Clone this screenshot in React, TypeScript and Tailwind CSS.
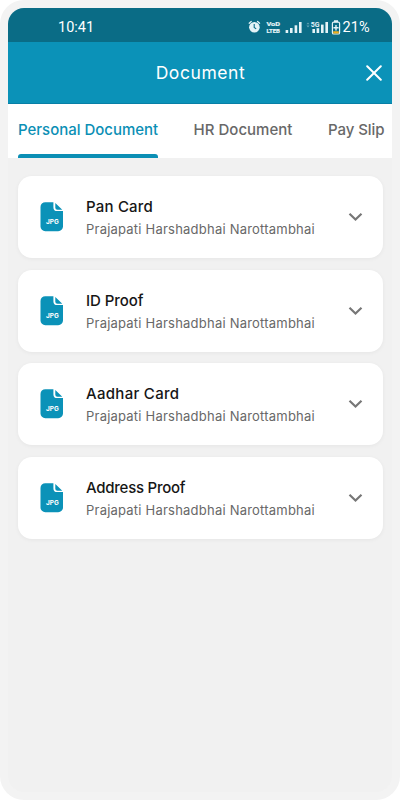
import { useState } from "react";

const TABS = [
  { label: "Personal Document", tracking: "tracking-[-0.02px]" },
  { label: "HR Document", tracking: "tracking-[0.01px]" },
  { label: "Pay Slip", tracking: "tracking-[-0.05px]" },
];

const DOCUMENTS = [
  { title: "Pan Card", tracking: "tracking-[0.2px]" },
  { title: "ID Proof", tracking: "tracking-[-0.05px]" },
  { title: "Aadhar Card", tracking: "tracking-[0.3px]" },
  { title: "Address Proof", tracking: "tracking-[-0.25px]" },
];

function StatusIcons() {
  return (
    <svg
      width="94"
      height="18"
      viewBox="0 0 94 18"
      className="block"
      fill="#e4f3f7"
      fontFamily="Roboto, sans-serif"
    >
      {/* alarm */}
      <circle cx="7.4" cy="9.2" r="5.3" />
      <path
        d="M2.2 5.2 4.2 3.5M12.6 5.2 10.6 3.5"
        stroke="#e4f3f7"
        strokeWidth="1.3"
        strokeLinecap="round"
      />
      <path
        d="M7.2 6v3.4l2 1.5"
        stroke="#0a6c86"
        strokeWidth="1.1"
        fill="none"
      />
      {/* volte */}
      <g fontSize="6" fontWeight="700" stroke="#e4f3f7" strokeWidth="0.2">
        <text
          x="19.4"
          y="8.2"
          textLength="13.6"
          lengthAdjust="spacingAndGlyphs"
        >
          VoD
        </text>
        <text
          x="19.4"
          y="15.2"
          textLength="13.6"
          lengthAdjust="spacingAndGlyphs"
        >
          LTEB
        </text>
      </g>
      {/* signal */}
      <rect x="38.6" y="12" width="2.6" height="3" />
      <rect x="43" y="10" width="2.6" height="5" />
      <rect x="47.6" y="7.3" width="2.6" height="7.7" />
      <rect x="52" y="4" width="2.6" height="11" />
      {/* 5g signal */}
      <path d="m59.4 6.2 1.6-1.8 1.6 1.8zM59.4 7.6h3.2L61 9.4z" opacity="0.4" />
      <text
        x="63.8"
        y="8.8"
        fontSize="7.8"
        fontWeight="700"
        textLength="8.8"
        lengthAdjust="spacingAndGlyphs"
      >
        5G
      </text>
      <rect x="65.4" y="11" width="2.6" height="4" />
      <rect x="69.6" y="10.2" width="2.6" height="4.8" />
      <rect x="74" y="6.6" width="2.6" height="8.4" />
      <rect x="78.4" y="4" width="2.6" height="11" />
      {/* battery */}
      <path d="M87 2.2h4v2h-4z" />
      <rect
        x="85.4"
        y="4.2"
        width="7.2"
        height="11.8"
        rx="1.3"
        fill="none"
        stroke="#e4f3f7"
        strokeWidth="1.2"
      />
      <path d="M86.2 13.2h5.6v2.2h-5.6z" fill="#f2b01e" />
      <path d="M88.3 7h1.4v2h1.9v1.4h-1.9v2h-1.4v-2h-1.9V9h1.9z" />
    </svg>
  );
}

function FileIcon() {
  return (
    <svg width="24" height="30" viewBox="0 0 24 30" className="block">
      <path
        d="M5.3.2h8.1v5a3.9 3.9 0 0 0 3.9 3.9h5.7v15.3a4.8 4.8 0 0 1-4.8 4.8H5.3a4.8 4.8 0 0 1-4.8-4.8V5A4.8 4.8 0 0 1 5.3.2z"
        fill="#0b92b8"
      />
      <path
        d="M15.3.9 22.3 7.8h-4.9a2.1 2.1 0 0 1-2.1-2.1z"
        fill="#0b92b8"
      />
      <text
        x="6"
        y="22"
        fontSize="6.6"
        fontWeight="700"
        fontFamily="Inter, sans-serif"
        textLength="12.8"
        lengthAdjust="spacingAndGlyphs"
        fill="#ffffff"
      >
        JPG
      </text>
    </svg>
  );
}

function DocumentCard({
  title,
  tracking,
  owner,
}: {
  title: string;
  tracking: string;
  owner: string;
}) {
  return (
    <div className="flex h-[82px] items-center rounded-[14px] bg-white pr-5 pl-[22px] shadow-[0_1px_4px_rgba(0,0,0,0.05)]">
      <FileIcon />
      <div className="ml-[22px] flex-1 pt-px">
        <p
          className={`text-[15px] leading-[23px] font-medium whitespace-nowrap text-[#161616] ${tracking}`}
        >
          {title}
        </p>
        <p className="text-[13px] leading-[22px] tracking-[0.22px] whitespace-nowrap text-[#686868]">
          {owner}
        </p>
      </div>
      <svg width="15" height="10" viewBox="0 0 15 10" className="block">
        <path
          d="M1.5 1.7 7.500 7.5l6-5.800"
          fill="none"
          stroke="#777777"
          strokeWidth="2.2"
        />
      </svg>
    </div>
  );
}

function App() {
  const [selectedTab, setSelectedTab] = useState(0);

  return (
    <div className="h-[800px] w-[400px] overflow-hidden rounded-3xl bg-[#f3f3f3] p-2 font-[Inter,sans-serif]">
      <div className="h-full overflow-hidden rounded-2xl bg-[#f1f1f1]">
        <div className="flex h-[34px] items-center bg-[#0a6c86] pr-[22.5px] pl-[50px] font-[Roboto,sans-serif] text-white">
          <span className="pt-[5px] text-[14.5px] leading-5">10:41</span>
          <div className="ml-auto flex items-center pt-[3px]">
            <StatusIcons />
            <span className="ml-[1.5px] pt-[2px] text-[14.5px] leading-5">
              21%
            </span>
          </div>
        </div>
        <div className="grid h-[62px] grid-cols-[1fr_auto_1fr] items-center border-b border-[#087fa6] bg-[#0b92b8] pr-[10px]">
          <h1 className="col-start-2 ml-[11px] pt-[2px] text-[17.5px] tracking-[0.58px] text-white">
            Document
          </h1>
          <svg
            width="16"
            height="16"
            viewBox="0 0 16 16"
            className="block justify-self-end"
          >
            <path
              d="m1.2 1.2 13.6 13.6M14.8 1.2 1.2 14.8"
              stroke="#ffffff"
              strokeWidth="2"
              strokeLinecap="round"
            />
          </svg>
        </div>
        <div className="flex h-[54px] gap-[35.5px] bg-white pl-[10px]">
          {TABS.map((tab, index) => (
            <button
              key={tab.label}
              onClick={() => setSelectedTab(index)}
              className={`flex flex-col justify-between pt-[14px] text-[15px] leading-6 font-medium whitespace-nowrap ${
                tab.tracking
              } ${selectedTab === index ? "text-[#0b8fb5]" : "text-[#686868]"}`}
            >
              {tab.label}
              {selectedTab === index && (
                <span className="h-1 w-full rounded-t-[3px] bg-[#0b8fb5]"></span>
              )}
            </button>
          ))}
        </div>
        <div className="flex flex-col gap-[11.5px] py-[18px] pr-[9px] pl-[10px]">
          {DOCUMENTS.map((document) => (
            <DocumentCard
              key={document.title}
              title={document.title}
              tracking={document.tracking}
              owner="Prajapati Harshadbhai Narottambhai"
            />
          ))}
        </div>
      </div>
    </div>
  );
}

export default App;
